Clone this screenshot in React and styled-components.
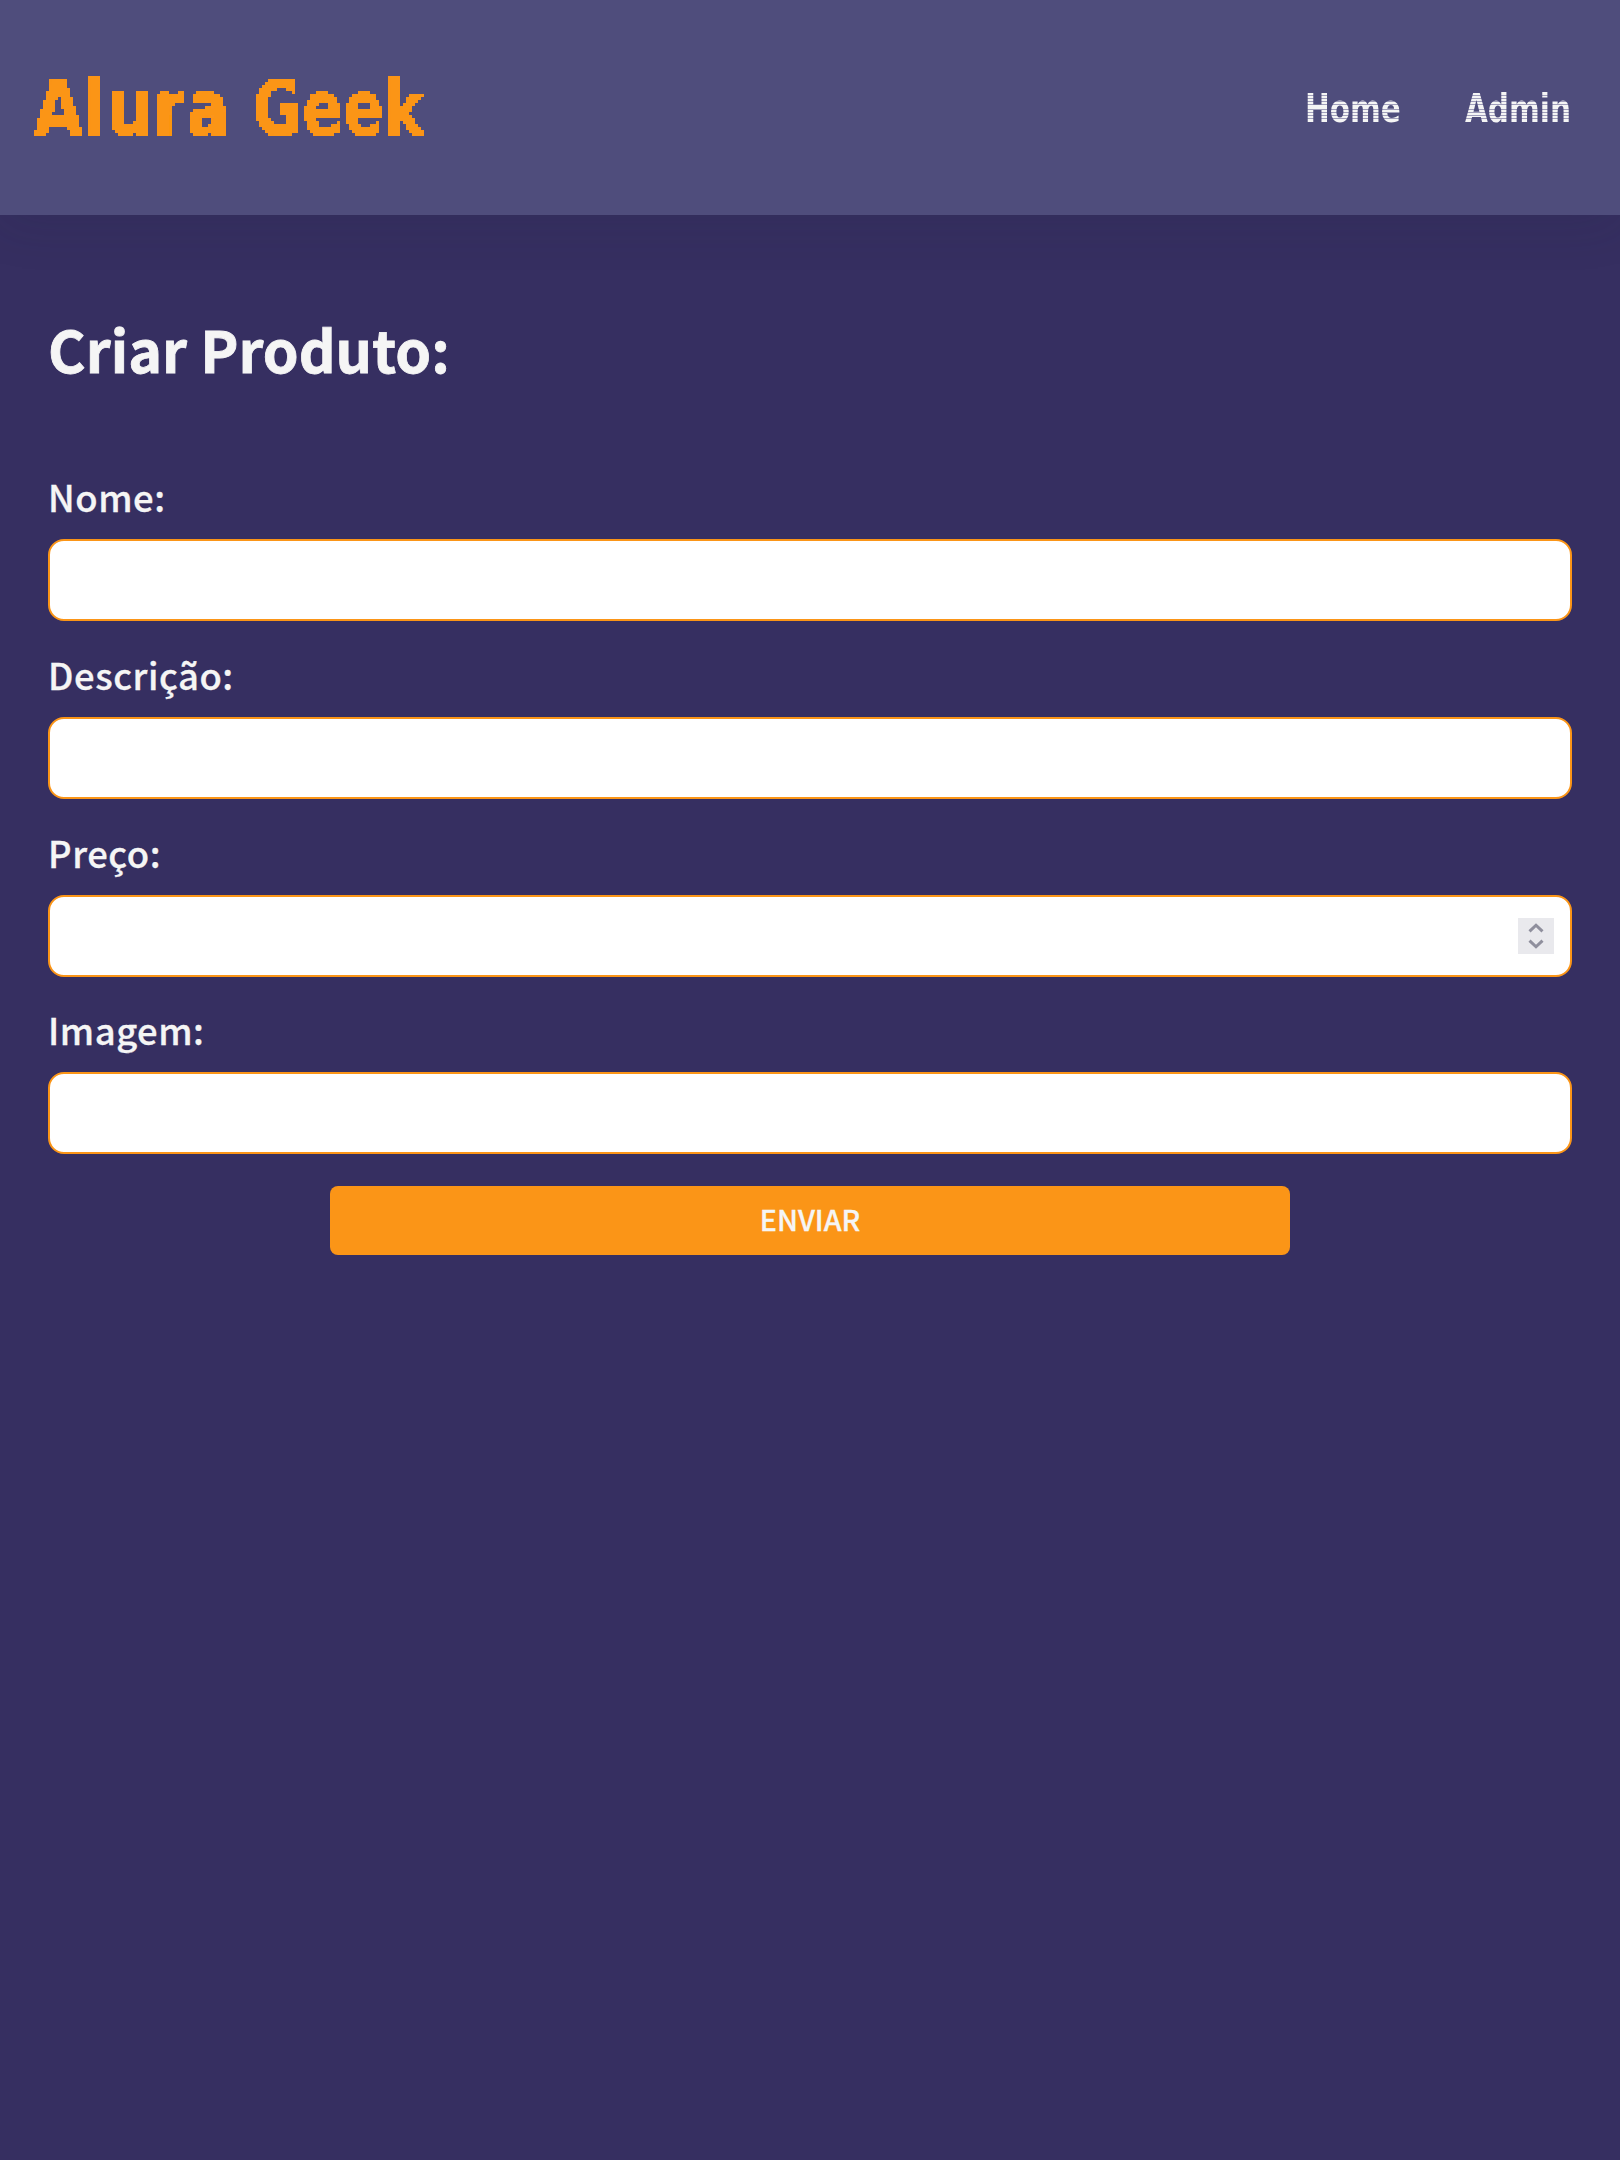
import React from "react";
import styled, { createGlobalStyle } from "styled-components";

const GlobalStyle = createGlobalStyle`
  * { box-sizing: border-box; }
  body {
    margin: 0;
    background: #362f61;
    color: #f5f5f5;
    font-family: "Noto Sans CJK SC", "Noto Sans", sans-serif;
  }
`;

const Page = styled.div`
  min-height: 2160px;
  display: flex;
  flex-direction: column;
`;

const Header = styled.header`
  height: 215px;
  padding: 2px 48px 0 34px;
  display: flex;
  align-items: center;
  justify-content: space-between;
  background: #4f4d7c;
  box-shadow: 0 8px 48px rgba(31, 38, 60, 0.14);
`;

const PixelText = styled.span`
  display: block;
  width: max-content;
  font-family: "DejaVu Sans Condensed", "DejaVu Sans", sans-serif;
  font-stretch: condensed;
  font-weight: 700;
  white-space: nowrap;
  transform-origin: left center;
  transform: scaleX(${(p) => p.$scale});
`;

const Logo = styled.div`
  display: flex;
  width: 420px;
  color: #fb9517;
  filter: url(#pixels);
`;

const LogoWord = styled.span`
  flex: 0 0 ${(p) => p.$width}px;
`;

const LogoText = styled(PixelText)`
  font-size: 76px;
  line-height: 96px;
  letter-spacing: 1.5px;
  -webkit-text-stroke: 1.2px #fb9517;
`;

const Nav = styled.nav`
  display: flex;
  gap: 64px;
`;

const NavLink = styled.a`
  width: ${(p) => p.$width}px;
  text-decoration: none;
`;

const NavText = styled(PixelText)`
  font-size: 38.4px;
  line-height: 48px;
  color: transparent;
  background: repeating-linear-gradient(
    to bottom,
    #f5f5f5 0 2px,
    #a09eba 2px 2.8px
  );
  background-clip: text;
`;

const Form = styled.form`
  display: flex;
  flex-direction: column;
  padding: 94px 48px 0;
`;

const Title = styled.h1`
  margin: 0 0 82px;
  font-size: 57.3px;
  line-height: 80px;
  font-weight: 700;
  letter-spacing: 0.05px;
  -webkit-text-stroke: 0.8px #f5f5f5;
`;

const Fields = styled.div`
  display: flex;
  flex-direction: column;
  gap: 27.8px;
`;

const Field = styled.label`
  display: flex;
  flex-direction: column;
  gap: 18px;
  font-size: 36.4px;
  line-height: 50px;
  font-weight: 500;
  letter-spacing: 0.55px;
  -webkit-text-stroke: 0.3px #f5f5f5;
`;

const InputBox = styled.span`
  display: flex;
  align-items: center;
  height: 82px;
  padding: 0 16px;
  background: #fff;
  border: 2px solid #fb9517;
  border-radius: 16px;
`;

const Input = styled.input`
  flex: 1;
  min-width: 0;
  border: 0;
  outline: 0;
  background: transparent;
  font: inherit;
`;

const Spinner = styled.svg`
  width: 36px;
  height: 36px;
  background: #e9e9ed;
  fill: none;
  stroke: #8f8f9d;
  stroke-width: 3;
`;

const Submit = styled.button`
  width: 960px;
  height: 69px;
  margin: 31.7px 0 0 282px;
  padding: 0 0 3px;
  border: 0;
  border-radius: 8px;
  background: #fb9517;
  color: #f5f5f5;
  font-family: inherit;
  font-size: 28.6px;
  font-weight: 500;
  line-height: 40px;
  -webkit-text-stroke: 0.3px #f5f5f5;
`;

const Defs = styled.svg`
  position: absolute;
  width: 0;
  height: 0;
`;

const fields = [
  { label: "Nome:" },
  { label: "Descrição:" },
  { label: "Preço:", numeric: true },
  { label: "Imagem:" },
];

const links = [
  { text: "Home", width: 96 },
  { text: "Admin", width: 107 },
];

export default function App() {
  return (
    <Page>
      <GlobalStyle />
      <Defs aria-hidden="true">
        <filter id="pixels" x="0" y="0" width="1" height="1">
          <feFlood x="1" y="1" width="1" height="1" floodColor="#000" />
          <feComposite width="3" height="3" />
          <feTile result="grid" />
          <feComposite in="SourceGraphic" in2="grid" operator="in" />
          <feMorphology operator="dilate" radius="1" result="blocks" />
          <feComponentTransfer in="blocks">
            <feFuncA type="discrete" tableValues="0 1" />
          </feComponentTransfer>
        </filter>
      </Defs>
      <Header>
        <Logo>
          <LogoWord $width={219}>
            <LogoText $scale={0.925}>Alura</LogoText>
          </LogoWord>
          <LogoWord $width={180}>
            <LogoText $scale={0.86}>Geek</LogoText>
          </LogoWord>
        </Logo>
        <Nav>
          {links.map((l) => (
            <NavLink key={l.text} $width={l.width} href="#">
              <NavText $scale={0.855}>{l.text}</NavText>
            </NavLink>
          ))}
        </Nav>
      </Header>
      <Form>
        <Title>Criar Produto:</Title>
        <Fields>
          {fields.map((f) => (
            <Field key={f.label}>
              {f.label}
              <InputBox>
                <Input type="text" inputMode={f.numeric ? "numeric" : "text"} />
                {f.numeric && (
                  <Spinner viewBox="0 0 36 36">
                    <path d="M11.5 13.4 18 7.2l6.5 6.2M11.5 22.6l6.5 6.2 6.5-6.2" />
                  </Spinner>
                )}
              </InputBox>
            </Field>
          ))}
        </Fields>
        <Submit type="button">ENVIAR</Submit>
      </Form>
    </Page>
  );
}
